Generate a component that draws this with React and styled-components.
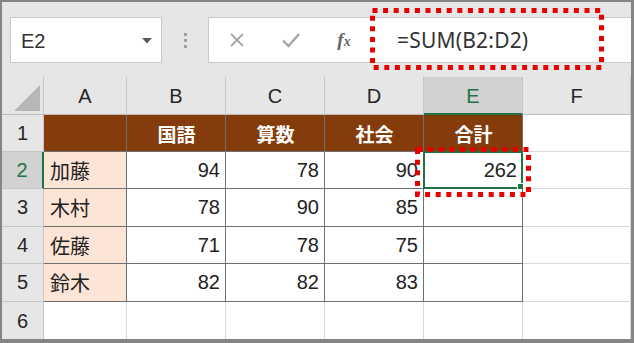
import React from "react";
import styled, { createGlobalStyle } from "styled-components";

const GlobalStyle = createGlobalStyle`
  html, body { margin: 0; padding: 0; background: #fff; }
  body { font-family: "Liberation Sans", "Noto Sans CJK JP", sans-serif; }
`;

const GREEN = "#217346";
const BROWN = "#843c0c";
const PEACH = "#fce4d6";
const DARK_LINE = "#6f6f6f";
const GRID_LINE = "#d9d9d9";
const HEAD_LINE = "#c6c6c6";

const Frame = styled.div`
  position: relative;
  width: 634px;
  height: 343px;
  box-sizing: border-box;
  border: 2px solid #858585;
  border-right-width: 3px;
  border-bottom-width: 4px;
  background: #e6e6e6;
  overflow: hidden;
`;

const Toolbar = styled.div`
  display: flex;
  height: 75px;
  box-sizing: border-box;
  padding: 15px 0 0 8px;
`;

const NameBox = styled.div`
  display: flex;
  align-items: center;
  justify-content: space-between;
  width: 152px;
  height: 46px;
  box-sizing: border-box;
  border: 1px solid #c8c8c8;
  background: #fff;
  padding: 2px 9px 0 10px;
  font-size: 20px;
  color: #333;
`;

const Grip = styled.div`
  display: flex;
  flex-direction: column;
  align-items: center;
  justify-content: center;
  gap: 3px;
  width: 46px;
  height: 46px;
  span {
    width: 3px;
    height: 3px;
    background: #a0a0a0;
  }
`;

const FormulaBox = styled.div`
  position: relative;
  flex: 1;
  display: flex;
  align-items: center;
  height: 46px;
  box-sizing: border-box;
  border: 1px solid #c8c8c8;
  border-right: none;
  background: #fff;
`;

const ToolIcon = styled.div`
  display: flex;
  align-items: center;
  justify-content: center;
  width: ${(p) => p.w}px;
  height: 100%;
`;

const Fx = styled.div`
  width: 54px;
  text-align: center;
  font-family: "Liberation Serif", serif;
  font-style: italic;
  font-weight: 700;
  font-size: 19px;
  color: #666;
  small { font-size: 14px; }
`;

const Formula = styled.div`
  flex: 1;
  height: 100%;
  display: flex;
  align-items: center;
  padding-left: 26px;
  font-family: "Noto Sans", "Liberation Sans", sans-serif;
  font-size: 21px;
  color: #333;
  letter-spacing: 0.2px;
`;

const Sheet = styled.div`
  display: grid;
  grid-template-columns: 42px 83px 99px 99px 99px 99px 1fr;
  grid-template-rows: 38px 37px 37px 38px 37px 38px 1fr;
  height: 264px;
  background: #fff;
`;

const Corner = styled.div`
  position: relative;
  background: #e6e6e6;
  border-right: 1px solid ${HEAD_LINE};
  border-bottom: 1px solid #bdbdbd;
  svg { position: absolute; right: 3px; bottom: 3px; }
`;

const ColHead = styled.div`
  display: flex;
  align-items: center;
  justify-content: center;
  box-sizing: border-box;
  background: ${(p) => (p.active ? "#d2d2d2" : "#e6e6e6")};
  color: ${(p) => (p.active ? GREEN : "#262626")};
  border-right: 1px solid ${HEAD_LINE};
  border-bottom: ${(p) => (p.active ? `2px solid ${GREEN}` : "1px solid #bdbdbd")};
  font-size: 20px;
  padding-top: 2px;
`;

const RowHead = styled.div`
  display: flex;
  align-items: center;
  justify-content: center;
  box-sizing: border-box;
  background: ${(p) => (p.active ? "#d2d2d2" : "#e6e6e6")};
  color: ${(p) => (p.active ? GREEN : "#262626")};
  border-right: ${(p) => (p.active ? `2px solid ${GREEN}` : `1px solid ${HEAD_LINE}`)};
  border-bottom: 1px solid ${HEAD_LINE};
  font-size: 20px;
`;

const Cell = styled.div`
  position: relative;
  display: flex;
  align-items: center;
  justify-content: ${(p) => (p.align === "right" ? "flex-end" : p.align === "center" ? "center" : "flex-start")};
  box-sizing: border-box;
  padding: 0 5px 0 6px;
  background: ${(p) => p.fill || "#fff"};
  color: ${(p) => (p.head ? "#fff" : "#222")};
  font-family: "Liberation Sans", "Noto Sans CJK JP", sans-serif;
  font-size: ${(p) => (p.head ? "19px" : "20px")};
  font-weight: ${(p) => (p.head ? 700 : 400)};
  border-right: 1px solid ${(p) => (p.boxed ? DARK_LINE : GRID_LINE)};
  border-bottom: 1px solid ${(p) => (p.boxed ? DARK_LINE : GRID_LINE)};
`;

const Selection = styled.div`
  position: absolute;
  left: -1px;
  top: -1px;
  right: -1px;
  bottom: -1px;
  border: 2px solid ${GREEN};
  span {
    position: absolute;
    right: -5px;
    bottom: -5px;
    width: 7px;
    height: 7px;
    background: ${GREEN};
    border: 1px solid #fff;
  }
`;

const Callout = styled.svg`
  position: absolute;
  left: ${(p) => p.x}px;
  top: ${(p) => p.y}px;
  overflow: visible;
  pointer-events: none;
  z-index: 2;
`;

// red dotted box drawn around a part of the sheet
function DottedBox({ x, y, w, h }) {
  return (
    <Callout x={x} y={y} width={w} height={h}>
      <rect
        x="2.5"
        y="2.5"
        width={w - 5}
        height={h - 5}
        fill="none"
        stroke="#e60000"
        strokeWidth="5"
        strokeDasharray="5 5.6"
      />
    </Callout>
  );
}

const columns = ["A", "B", "C", "D", "E", "F"];
const subjects = ["", "国語", "算数", "社会", "合計"];
const rows = [
  { name: "加藤", scores: [94, 78, 90], total: 262 },
  { name: "木村", scores: [78, 90, 85] },
  { name: "佐藤", scores: [71, 78, 75] },
  { name: "鈴木", scores: [82, 82, 83] },
];

export default function App() {
  return (
    <>
      <GlobalStyle />
      <Frame>
        <Toolbar>
          <NameBox>
            <span>E2</span>
            <svg width="10" height="6" viewBox="0 0 10 6">
              <polygon points="0,0 10,0 5,5.5" fill="#5a5a5a" />
            </svg>
          </NameBox>
          <Grip>
            <span />
            <span />
            <span />
          </Grip>
          <FormulaBox>
            <ToolIcon w={56}>
              <svg width="16" height="16" viewBox="0 0 16 16">
                <path d="M2 2 L14 14 M14 2 L2 14" stroke="#a6a6a6" strokeWidth="1.8" />
              </svg>
            </ToolIcon>
            <ToolIcon w={52}>
              <svg width="20" height="16" viewBox="0 0 20 16">
                <path d="M2 8.5 L7.5 14 L18 2" stroke="#a6a6a6" strokeWidth="2.4" fill="none" />
              </svg>
            </ToolIcon>
            <Fx>
              f<small>x</small>
            </Fx>
            <Formula>=SUM(B2:D2)</Formula>
            <DottedBox x={161} y={-10} w={234} h={62} />
          </FormulaBox>
        </Toolbar>

        <Sheet>
          <Corner>
            <svg width="26" height="26" viewBox="0 0 26 26">
              <polygon points="26,0 26,26 0,26" fill="#b7b7b7" />
            </svg>
          </Corner>
          {columns.map((c) => (
            <ColHead key={c} active={c === "E"}>
              {c}
            </ColHead>
          ))}

          <RowHead>1</RowHead>
          {subjects.map((s, i) => (
            <Cell key={i} head boxed fill={BROWN} align="center">
              {s}
            </Cell>
          ))}
          <Cell />

          {rows.map((r, i) => (
            <React.Fragment key={r.name}>
              <RowHead active={i === 0}>{i + 2}</RowHead>
              <Cell boxed fill={PEACH}>
                {r.name}
              </Cell>
              {r.scores.map((v, j) => (
                <Cell key={j} boxed align="right">
                  {v}
                </Cell>
              ))}
              <Cell boxed align="right">
                {r.total}
                {i === 0 && (
                  <>
                    <Selection>
                      <span />
                    </Selection>
                    <DottedBox x={-9} y={-5} w={116} h={50} />
                  </>
                )}
              </Cell>
              <Cell />
            </React.Fragment>
          ))}

          <RowHead>6</RowHead>
          {columns.map((c) => (
            <Cell key={c} />
          ))}
        </Sheet>
      </Frame>
    </>
  );
}
